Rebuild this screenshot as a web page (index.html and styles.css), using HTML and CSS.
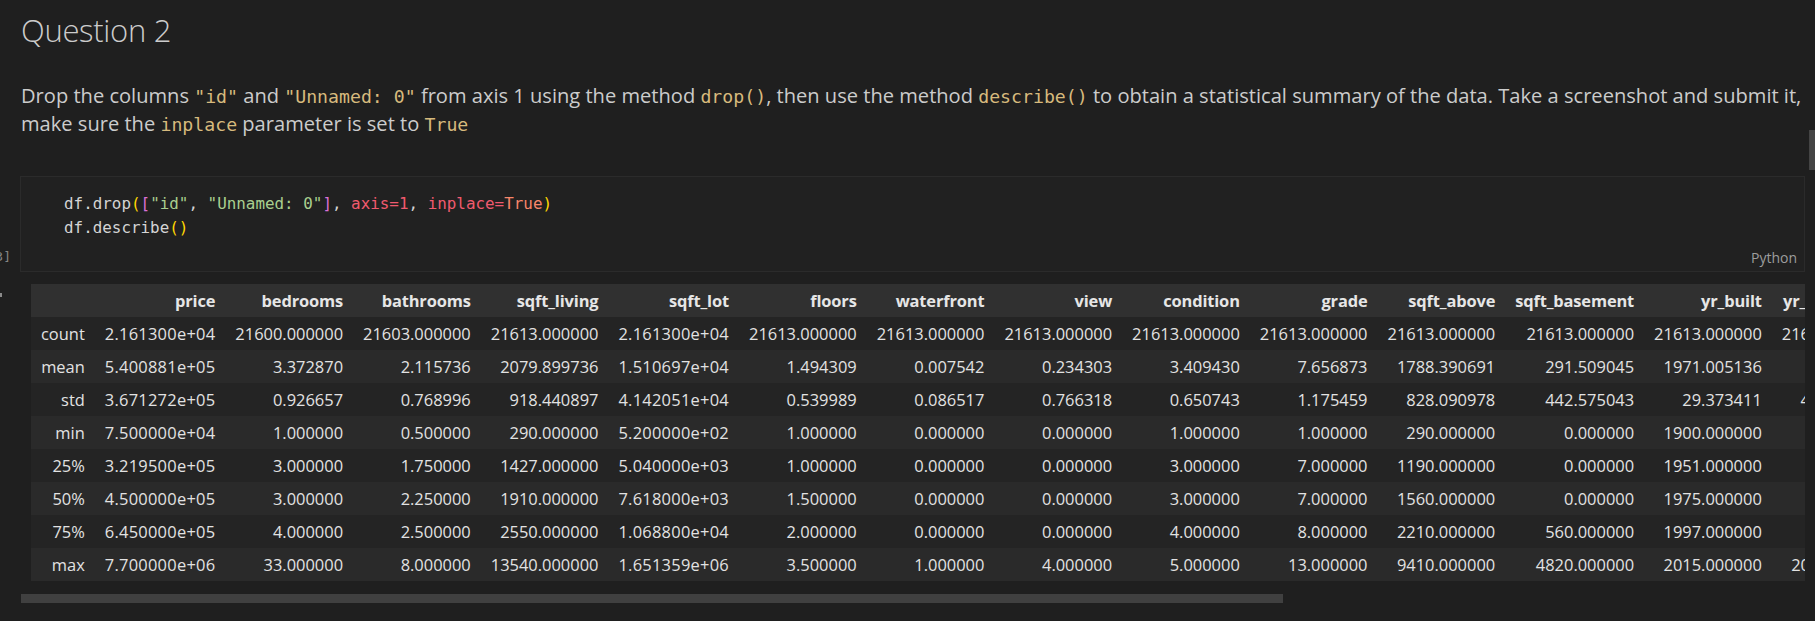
FILE: index.html
```html
<!DOCTYPE html>
<html lang="en">
<head>
<meta charset="utf-8">
<title>Question 2</title>
<link rel="stylesheet" href="styles.css">
</head>
<body>
<div class="notebook">
  <section class="md-cell">
    <h1 class="title">Question 2</h1>
    <p class="desc">Drop the columns <code>"id"</code> and <code>"Unnamed: 0"</code> from axis 1 using the method <code>drop()</code>, then use the method <code>describe()</code> to obtain a statistical summary of the data. Take a screenshot and submit it, make sure the <code>inplace</code> parameter is set to <code>True</code></p>
  </section>

  <section class="code-cell">
    <div class="gutter"><span class="exec">[3]</span></div>
    <div class="editor">
<pre class="code"><span class="t">df.drop</span><span class="b1">(</span><span class="b2">[</span><span class="s">"id"</span>, <span class="s">"Unnamed: 0"</span><span class="b2">]</span>, <span class="k">axis=1</span>, <span class="k">inplace=</span><span class="c">True</span><span class="b1">)</span>
<span class="t">df.describe</span><span class="b1">()</span></pre>
      <div class="footer"><span class="lang">Python</span></div>
    </div>
  </section>

  <section class="output">
    <div class="out-gutter"><span class="out-mark"></span></div>
    <div class="out-body">
      <div class="table-clip">
        <table class="df">
          <thead>
            <tr><th></th><th>price</th><th>bedrooms</th><th>bathrooms</th><th>sqft_living</th><th>sqft_lot</th><th>floors</th><th>waterfront</th><th>view</th><th>condition</th><th>grade</th><th>sqft_above</th><th>sqft_basement</th><th>yr_built</th><th>yr_renovated</th><th>zipcode</th><th>lat</th><th>long</th><th>sqft_living15</th><th>sqft_lot15</th></tr>
          </thead>
          <tbody>
            <tr><th>count</th><td class="sci">2.161300e+04</td><td>21600.000000</td><td>21603.000000</td><td>21613.000000</td><td class="sci">2.161300e+04</td><td>21613.000000</td><td>21613.000000</td><td>21613.000000</td><td>21613.000000</td><td>21613.000000</td><td>21613.000000</td><td>21613.000000</td><td>21613.000000</td><td>21613.000000</td><td>21613.000000</td><td>21613.000000</td><td>21613.000000</td><td>21613.000000</td><td>21613.000000</td></tr>
            <tr><th>mean</th><td class="sci">5.400881e+05</td><td>3.372870</td><td>2.115736</td><td>2079.899736</td><td class="sci">1.510697e+04</td><td>1.494309</td><td>0.007542</td><td>0.234303</td><td>3.409430</td><td>7.656873</td><td>1788.390691</td><td>291.509045</td><td>1971.005136</td><td>84.402258</td><td>98077.939805</td><td>47.560053</td><td>-122.213896</td><td>1986.552492</td><td>12768.455652</td></tr>
            <tr><th>std</th><td class="sci">3.671272e+05</td><td>0.926657</td><td>0.768996</td><td>918.440897</td><td class="sci">4.142051e+04</td><td>0.539989</td><td>0.086517</td><td>0.766318</td><td>0.650743</td><td>1.175459</td><td>828.090978</td><td>442.575043</td><td>29.373411</td><td>401.679240</td><td>53.505026</td><td>0.138564</td><td>0.140828</td><td>685.391304</td><td>27304.179631</td></tr>
            <tr><th>min</th><td class="sci">7.500000e+04</td><td>1.000000</td><td>0.500000</td><td>290.000000</td><td class="sci">5.200000e+02</td><td>1.000000</td><td>0.000000</td><td>0.000000</td><td>1.000000</td><td>1.000000</td><td>290.000000</td><td>0.000000</td><td>1900.000000</td><td>0.000000</td><td>98001.000000</td><td>47.155900</td><td>-122.519000</td><td>399.000000</td><td>651.000000</td></tr>
            <tr><th>25%</th><td class="sci">3.219500e+05</td><td>3.000000</td><td>1.750000</td><td>1427.000000</td><td class="sci">5.040000e+03</td><td>1.000000</td><td>0.000000</td><td>0.000000</td><td>3.000000</td><td>7.000000</td><td>1190.000000</td><td>0.000000</td><td>1951.000000</td><td>0.000000</td><td>98033.000000</td><td>47.471000</td><td>-122.328000</td><td>1490.000000</td><td>5100.000000</td></tr>
            <tr><th>50%</th><td class="sci">4.500000e+05</td><td>3.000000</td><td>2.250000</td><td>1910.000000</td><td class="sci">7.618000e+03</td><td>1.500000</td><td>0.000000</td><td>0.000000</td><td>3.000000</td><td>7.000000</td><td>1560.000000</td><td>0.000000</td><td>1975.000000</td><td>0.000000</td><td>98065.000000</td><td>47.571800</td><td>-122.230000</td><td>1840.000000</td><td>7620.000000</td></tr>
            <tr><th>75%</th><td class="sci">6.450000e+05</td><td>4.000000</td><td>2.500000</td><td>2550.000000</td><td class="sci">1.068800e+04</td><td>2.000000</td><td>0.000000</td><td>0.000000</td><td>4.000000</td><td>8.000000</td><td>2210.000000</td><td>560.000000</td><td>1997.000000</td><td>0.000000</td><td>98118.000000</td><td>47.678000</td><td>-122.125000</td><td>2360.000000</td><td>10083.000000</td></tr>
            <tr><th>max</th><td class="sci">7.700000e+06</td><td>33.000000</td><td>8.000000</td><td>13540.000000</td><td class="sci">1.651359e+06</td><td>3.500000</td><td>1.000000</td><td>4.000000</td><td>5.000000</td><td>13.000000</td><td>9410.000000</td><td>4820.000000</td><td>2015.000000</td><td>2015.000000</td><td>98199.000000</td><td>47.777600</td><td>-121.315000</td><td>6210.000000</td><td>871200.000000</td></tr>
          </tbody>
        </table>
      </div>
      <div class="hscroll"><div class="thumb"></div></div>
    </div>
  </section>
</div>
<div class="vscroll"></div>
</body>
</html>
```

FILE: styles.css
```css
html, body {
  margin: 0;
  padding: 0;
}

body {
  background: #1f1f1f;
  width: 1815px;
  height: 621px;
  overflow: hidden;
  position: relative;
  font-family: "Open Sans", "Noto Sans", sans-serif;
}

.md-cell {
  padding: 10px 10px 0 21px;
}

.title {
  margin: 0;
  font-family: "Open Sans", sans-serif;
  font-weight: 300;
  font-size: 31px;
  letter-spacing: -0.3px;
  line-height: 40px;
  color: #cccccc;
}

.desc {
  margin: 32px 0 0;
  font-size: 20.1px;
  line-height: 27px;
  color: #cccccc;
}

.desc code {
  font-family: "DejaVu Sans Mono", monospace;
  font-size: 18.2px;
  color: #d7ba7d;
  white-space: pre;
}

.code-cell {
  display: flex;
  margin-top: 38px;
}

.gutter {
  width: 20px;
  display: flex;
  justify-content: flex-end;
  align-items: flex-end;
}

.exec {
  font-family: "DejaVu Sans Mono", monospace;
  font-size: 13px;
  line-height: 18px;
  color: #858585;
  white-space: nowrap;
  margin-right: 9px;
  margin-bottom: 6px;
}

.editor {
  width: 1785px;
  box-sizing: border-box;
  border: 1px solid #2b2b2b;
  background: #212121;
  padding: 15px 7px 4px 43px;
}

.code {
  margin: 0;
  font-family: "DejaVu Sans Mono", monospace;
  font-size: 15.9px;
  line-height: 24px;
  color: #d4d4d4;
}

.code .t { color: #d4d4d4; }
.code .b1 { color: #ffd700; }
.code .b2 { color: #da70d6; }
.code .s { color: #a9cf8f; }
.code .k { color: #f05a6e; }
.code .c { color: #f7866a; }

.footer {
  display: flex;
  justify-content: flex-end;
  margin-top: 9px;
  line-height: 18px;
}

.lang {
  font-size: 14px;
  color: #9d9d9d;
}

.output {
  display: flex;
  margin-top: 12px;
}

.out-gutter {
  width: 21px;
  flex: none;
  position: relative;
}

.out-mark {
  position: absolute;
  left: 0;
  top: 9px;
  width: 2px;
  height: 4px;
  background: #8a8a8a;
}

.out-body {
  width: 1784px;
  min-width: 0;
  flex: none;
  overflow: hidden;
}

.table-clip {
  overflow: hidden;
  padding-left: 10px;
}

.df {
  border-collapse: collapse;
  font-family: "Open Sans", sans-serif;
  font-size: 16.45px;
  color: #e2e2e2;
  white-space: nowrap;
}

.df th, .df td {
  height: 33px;
  padding: 0 10px;
  text-align: right;
  vertical-align: middle;
}

.df td.sci {
  letter-spacing: 0.25px;
}

.df thead th {
  background: #303030;
  font-weight: 700;
  color: #e6e6e6;
  letter-spacing: -0.15px;
}

.df tbody th {
  font-weight: 400;
}

.df tbody tr:nth-child(odd) {
  background: #242424;
}

.df tbody tr:nth-child(even) {
  background: #2a2a2a;
}

.hscroll {
  margin-top: 13px;
  height: 9px;
}

.thumb {
  width: 1262px;
  height: 100%;
  background: #404040;
}

.vscroll {
  position: absolute;
  right: 0;
  top: 130px;
  width: 6px;
  height: 40px;
  background: #444444;
}
```
